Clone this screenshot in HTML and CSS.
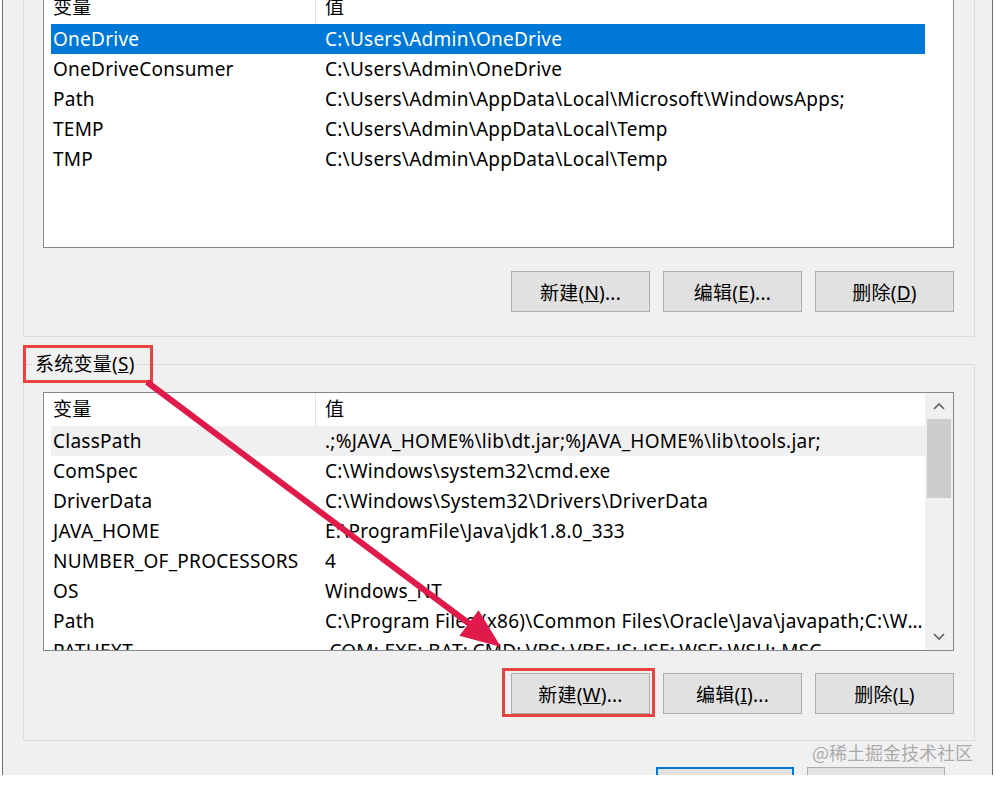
FILE: index.html
```html
<!DOCTYPE html>
<html lang="zh-CN">
<head>
<meta charset="utf-8">
<title>环境变量</title>
<link rel="stylesheet" href="styles.css">
</head>
<body>
<div class="window">
  <fieldset class="group user">
    <div class="list user-list">
      <div class="list-body">
        <div class="head"><span class="c1">变量</span><span class="c2">值</span></div>
        <div class="row sel"><span class="c1">OneDrive</span><span class="c2">C:\Users\Admin\OneDrive</span></div>
        <div class="row"><span class="c1">OneDriveConsumer</span><span class="c2">C:\Users\Admin\OneDrive</span></div>
        <div class="row"><span class="c1">Path</span><span class="c2">C:\Users\Admin\AppData\Local\Microsoft\WindowsApps;</span></div>
        <div class="row"><span class="c1">TEMP</span><span class="c2">C:\Users\Admin\AppData\Local\Temp</span></div>
        <div class="row"><span class="c1">TMP</span><span class="c2">C:\Users\Admin\AppData\Local\Temp</span></div>
      </div>
      <div class="sb-space"></div>
    </div>
    <div class="btns user-btns">
      <button class="btn">新建(<u>N</u>)...</button>
      <button class="btn">编辑(<u>E</u>)...</button>
      <button class="btn">删除(<u>D</u>)</button>
    </div>
  </fieldset>

  <fieldset class="group sys">
    <legend>系统变量(<u>S</u>)</legend>
    <div class="list sys-list">
      <div class="list-body">
        <div class="head"><span class="c1">变量</span><span class="c2">值</span></div>
        <div class="row hover"><span class="c1">ClassPath</span><span class="c2">.;%JAVA_HOME%\lib\dt.jar;%JAVA_HOME%\lib\tools.jar;</span></div>
        <div class="row"><span class="c1">ComSpec</span><span class="c2">C:\Windows\system32\cmd.exe</span></div>
        <div class="row"><span class="c1">DriverData</span><span class="c2">C:\Windows\System32\Drivers\DriverData</span></div>
        <div class="row"><span class="c1">JAVA_HOME</span><span class="c2">E:\ProgramFile\Java\jdk1.8.0_333</span></div>
        <div class="row"><span class="c1">NUMBER_OF_PROCESSORS</span><span class="c2">4</span></div>
        <div class="row"><span class="c1">OS</span><span class="c2">Windows_NT</span></div>
        <div class="row"><span class="c1">Path</span><span class="c2">C:\Program Files (x86)\Common Files\Oracle\Java\javapath;C:\Windows\system32;C:\Windows</span></div>
        <div class="row"><span class="c1">PATHEXT</span><span class="c2">.COM;.EXE;.BAT;.CMD;.VBS;.VBE;.JS;.JSE;.WSF;.WSH;.MSC</span></div>
      </div>
      <div class="scrollbar">
        <div class="sb-btn"><svg width="12" height="8" viewBox="0 0 12 8"><polyline points="1,7 6,2 11,7" fill="none" stroke="#606060" stroke-width="1.6"/></svg></div>
        <div class="sb-track"><div class="sb-thumb"></div></div>
        <div class="sb-btn down"><svg width="12" height="8" viewBox="0 0 12 8"><polyline points="1,1 6,6 11,1" fill="none" stroke="#606060" stroke-width="1.6"/></svg></div>
      </div>
    </div>
    <div class="btns sys-btns">
      <button class="btn">新建(<u>W</u>)...</button>
      <button class="btn">编辑(<u>I</u>)...</button>
      <button class="btn">删除(<u>L</u>)</button>
    </div>
  </fieldset>

  <div class="dlg-btns">
    <div class="dlg ok"></div>
    <div class="dlg"></div>
  </div>
</div>

<div class="watermark">@稀土掘金技术社区</div>

<svg class="annot" width="995" height="785" viewBox="0 0 995 785">
  <rect x="24.5" y="346.5" width="127" height="35" fill="none" stroke="#e8433f" stroke-width="3"/>
  <rect x="503.5" y="669.5" width="150" height="46" fill="none" stroke="#e8433f" stroke-width="3"/>
  <line x1="147" y1="382" x2="471" y2="625" stroke="#e01a4b" stroke-width="6"/>
  <polygon points="501,647 459.4,635.8 478.6,610.2" fill="#e01a4b"/>
</svg>
</body>
</html>
```

FILE: styles.css
```css
* { box-sizing: border-box; }

html, body {
  margin: 0;
  padding: 0;
}

body {
  position: relative;
  width: 995px;
  height: 785px;
  overflow: hidden;
  background: #ffffff;
  font-family: "Noto Sans", "Noto Sans CJK SC", sans-serif;
  font-size: 19px;
  letter-spacing: 0.25px;
  color: #000;
}

.window {
  margin-top: -36px;
  margin-left: 2px;
  width: 991px;
  height: 811px;
  overflow: hidden;
  background: #f0f0f0;
  border-left: 1px solid #6e6e6e;
  border-right: 1px solid #6e6e6e;
  padding: 0 17px 0 20px;
}

.group {
  margin: 0;
  min-width: 0;
  border: 1px solid #dcdcdc;
  padding: 25px 20px 24px 19px;
}

.group legend {
  margin-left: -10px;
  padding: 0 2px;
  line-height: 24px;
  height: 24px;
}

.group.sys {
  margin-top: 15px;
  padding-top: 16px;
  padding-bottom: 26px;
}

.list {
  display: flex;
  background: #fff;
  border: 1px solid #828790;
  overflow: hidden;
}

.user-list { height: 258px; }
.sys-list { height: 259px; }

.list-body {
  width: 881px;
  padding-left: 7px;
  overflow: hidden;
}

.head, .row {
  display: flex;
  white-space: nowrap;
}

.head {
  height: 33px;
  line-height: 33px;
}

.head .c1 {
  border-right: 1px solid #e5e5e5;
}

.row {
  height: 30px;
  line-height: 30px;
}

.c1 {
  flex: 0 0 265px;
  padding-left: 2px;
  overflow: hidden;
}

.c2 {
  flex: 1 1 auto;
  min-width: 0;
  padding-left: 9px;
  padding-right: 0;
  overflow: hidden;
  text-overflow: ellipsis;
}

.row.sel {
  background: #0078d7;
  color: #fff;
}

.row.hover {
  background: #f0f0f0;
}

.sb-space {
  flex: 1;
}

.scrollbar {
  flex: 1;
  display: flex;
  flex-direction: column;
  background: #f0f0f0;
}

.sb-btn {
  height: 26px;
  display: flex;
  align-items: center;
  justify-content: center;
}

.sb-btn svg { display: block; }

.sb-track {
  flex: 1;
  padding: 0 2px;
}

.sb-thumb {
  height: 79px;
  background: #cdcdcd;
}

.btns {
  display: flex;
  justify-content: flex-end;
  gap: 13px;
}

.user-btns { margin-top: 23px; }
.sys-btns { margin-top: 22px; }

.btn {
  width: 139px;
  height: 41px;
  margin: 0;
  padding: 0;
  background: #e1e1e1;
  border: 1px solid #adadad;
  font-family: "Noto Sans", "Noto Sans CJK SC", sans-serif;
  font-size: 19px;
  letter-spacing: 0.25px;
  color: #000;
}

.dlg-btns {
  display: flex;
  justify-content: flex-end;
  gap: 13px;
  margin-top: 26px;
  margin-right: 30px;
}

.dlg {
  width: 138px;
  height: 41px;
  background: #e1e1e1;
  border: 1px solid #adadad;
}

.dlg.ok {
  border: 2px solid #0078d7;
}

.watermark {
  position: absolute;
  left: 812px;
  top: 739px;
  font-size: 18px;
  letter-spacing: 0;
  line-height: 26px;
  color: rgba(110, 110, 110, 0.55);
  font-family: "Noto Sans CJK SC", sans-serif;
  white-space: nowrap;
}

.annot {
  position: absolute;
  left: 0;
  top: 0;
  pointer-events: none;
}
```
